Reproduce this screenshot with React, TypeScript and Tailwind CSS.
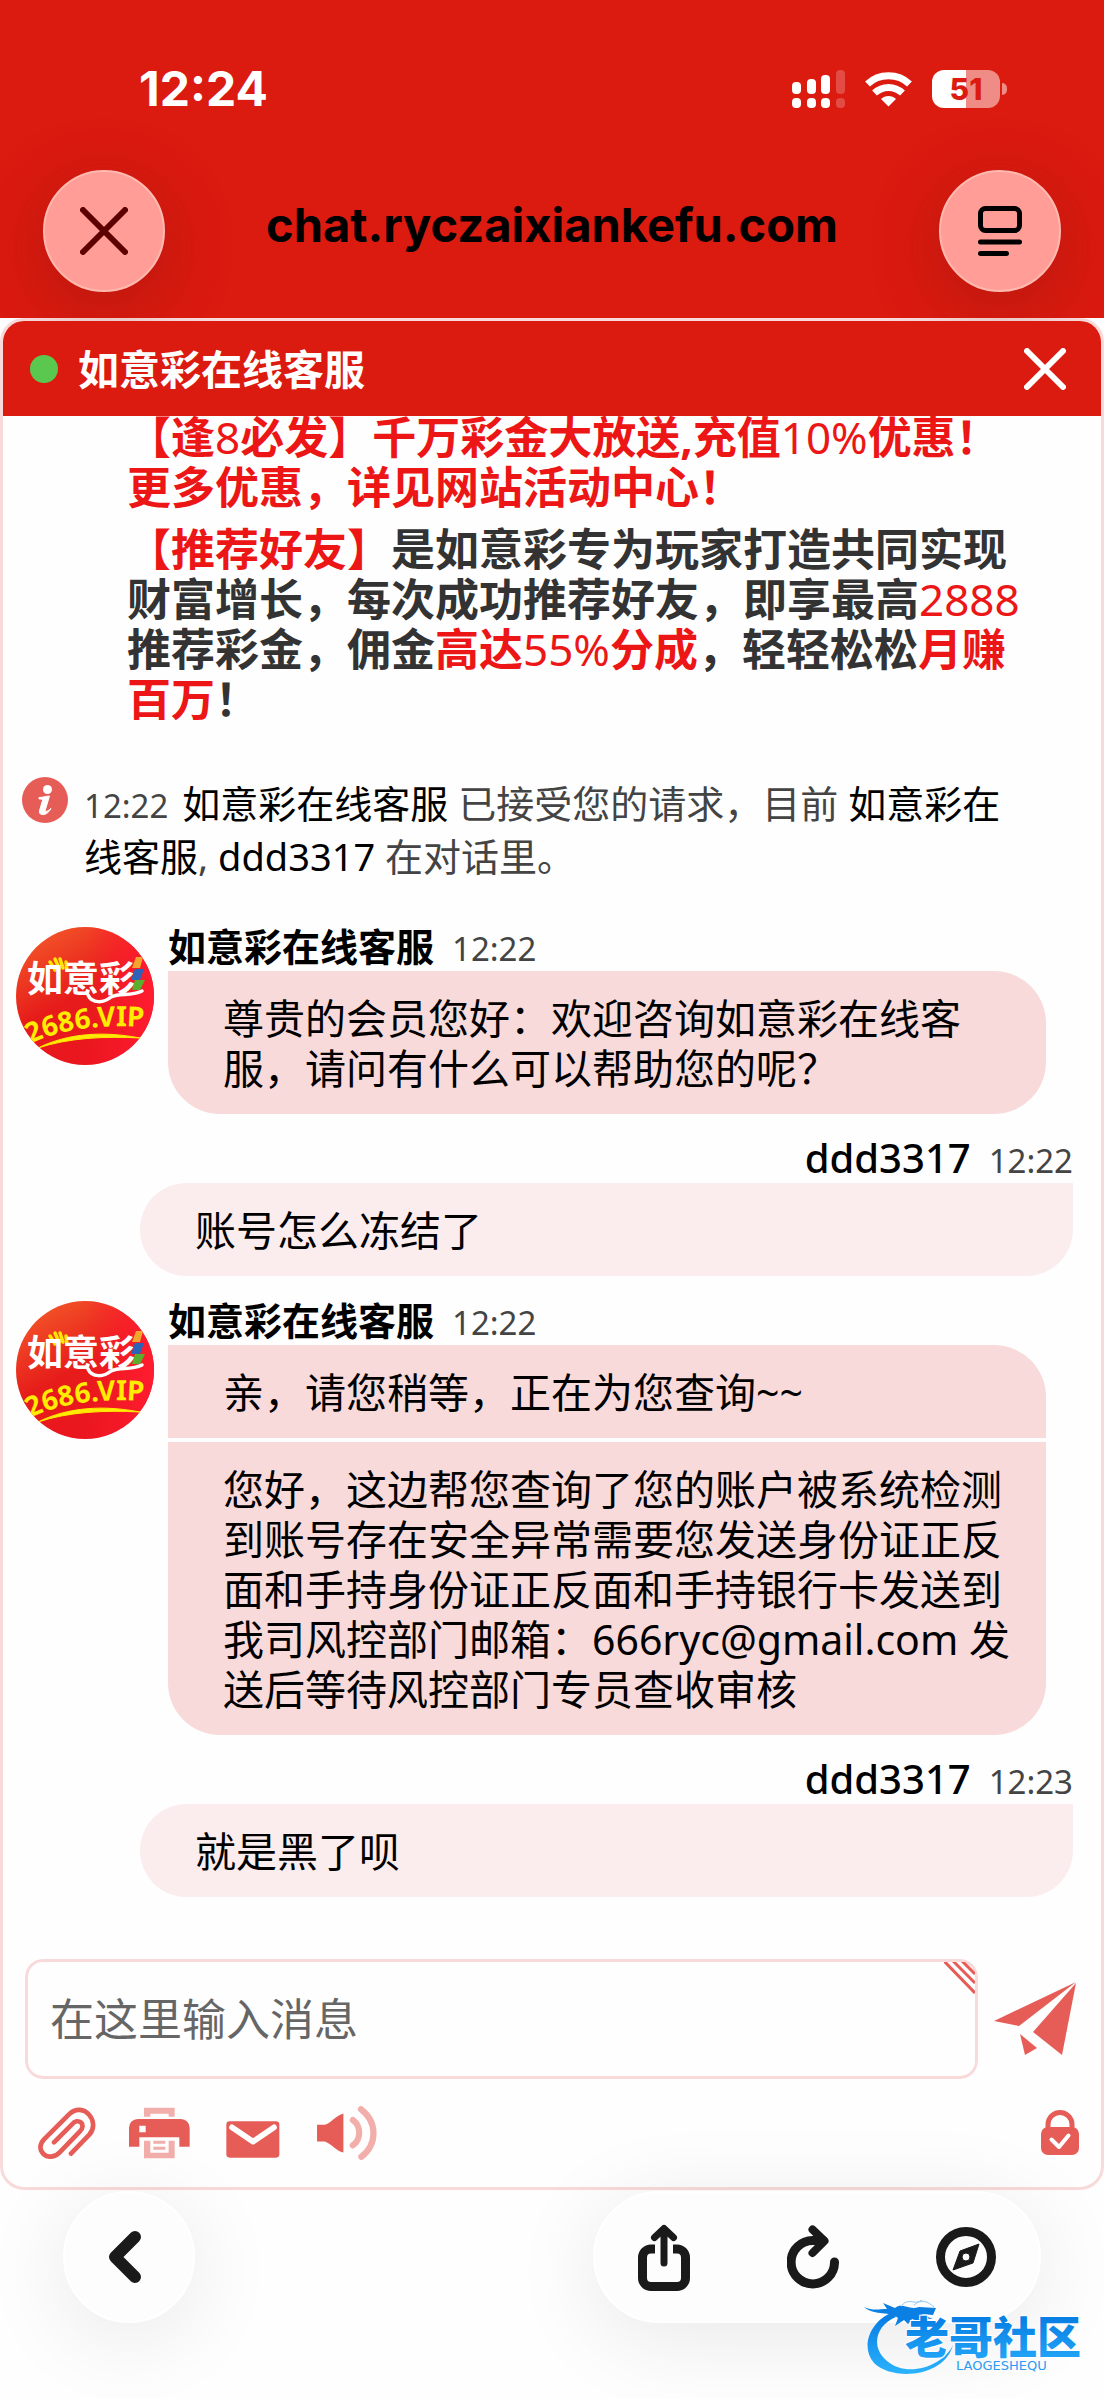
import type { ReactNode } from "react";

type Message = { text: string };
type MessageGroup = { from: "agent" | "visitor"; name: string; time: string; messages: Message[] };

const AGENT_NAME = "如意彩在线客服";
const VISITOR_NAME = "ddd3317";

const GROUPS: MessageGroup[] = [
  {
    from: "agent",
    name: AGENT_NAME,
    time: "12:22",
    messages: [{ text: "尊贵的会员您好：欢迎咨询如意彩在线客服，请问有什么可以帮助您的呢？" }],
  },
  {
    from: "visitor",
    name: VISITOR_NAME,
    time: "12:22",
    messages: [{ text: "账号怎么冻结了" }],
  },
  {
    from: "agent",
    name: AGENT_NAME,
    time: "12:22",
    messages: [
      { text: "亲，请您稍等，正在为您查询~~" },
      {
        text: "您好，这边帮您查询了您的账户被系统检测到账号存在安全异常需要您发送身份证正反面和手持身份证正反面和手持银行卡发送到我司风控部门邮箱：666ryc@gmail.com 发送后等待风控部门专员查收审核",
      },
    ],
  },
  {
    from: "visitor",
    name: VISITOR_NAME,
    time: "12:23",
    messages: [{ text: "就是黑了呗" }],
  },
];

function StatusBar() {
  return (
    <div className="flex h-[58px] items-center justify-between pr-[97px] pl-[139px]">
      <span className="font-['Inter'] text-[48px] leading-[58px] font-bold">12:24</span>
      <div className="flex items-center gap-5">
        <svg width="53" height="38" viewBox="0 0 53 38" fill="currentColor" aria-hidden="true">
          <rect x="0" y="12" width="9" height="12" rx="4" />
          <rect x="15" y="9" width="9" height="15" rx="4" />
          <rect x="29" y="5" width="9" height="19" rx="4" />
          <rect x="44" y="0" width="9" height="24" rx="4" opacity="0.22" />
          <rect x="0" y="28" width="9" height="10" rx="4" />
          <rect x="15" y="28" width="9" height="10" rx="4" />
          <rect x="29" y="28" width="9" height="10" rx="4" />
          <rect x="44" y="28" width="9" height="10" rx="4" opacity="0.22" />
        </svg>
        <svg width="47" height="35" viewBox="0 0 47 35" aria-hidden="true">
          <g fill="none" stroke="currentColor" strokeWidth="7">
            <path d="M2.500 12C14 1 33 1 44.500 12" />
            <path d="M9.500 21C17.500 13.500 29.500 13.500 37.500 21" />
          </g>
          <path d="M23.500 34.500L16 27C20 23 27 23 31 27Z" fill="currentColor" />
        </svg>
        <div className="flex items-center gap-[2px]">
          <span className="flex h-[38px] w-[68px] items-center justify-center rounded-xl bg-linear-to-r from-white from-50% to-[#ee8c85] to-50% font-['Inter'] text-[30px] leading-[38px] font-extrabold text-[#db1a10]">
            51
          </span>
          <span className="h-3 w-[5px] rounded-r-full bg-[#ee8c85]" />
        </div>
      </div>
    </div>
  );
}

function RoundButton({ label, children }: { label: string; children: ReactNode }) {
  return (
    <button
      type="button"
      aria-label={label}
      className="flex size-[122px] items-center justify-center rounded-full border-2 border-[#ffb9b1] bg-[#ff9d96] shadow-[0_16px_70px_rgba(90,20,10,0.28)]"
    >
      {children}
    </button>
  );
}

function BrowserHeader() {
  return (
    <header className="bg-[#db1a10] pt-[60px] pb-[26px] text-white">
      <StatusBar />
      <div className="mt-[52px] flex items-center justify-between px-[43px]">
        <RoundButton label="关闭">
          <svg width="48" height="48" viewBox="0 0 48 48" aria-hidden="true">
            <path d="M3 3L45 45M45 3L3 45" stroke="#5c0000" strokeWidth="6" strokeLinecap="round" />
          </svg>
        </RoundButton>
        <h1 className="pb-3 font-['Inter'] text-[47px] leading-[58px] font-bold text-black">
          chat.ryczaixiankefu.com
        </h1>
        <RoundButton label="阅读模式">
          <svg width="44" height="50" viewBox="0 0 44 50" fill="none" stroke="#000" strokeWidth="5" strokeLinecap="round" aria-hidden="true">
            <rect x="2.5" y="2.5" width="39" height="22" rx="5" />
            <path d="M2.500 36H41.500M2.500 47.500H28.500" />
          </svg>
        </RoundButton>
      </div>
    </header>
  );
}

function ChatHeader() {
  return (
    <div className="relative z-10 flex h-[95px] items-center justify-between bg-[#db1a10] pr-[35px] pl-[27px] text-white">
      <div className="flex items-center gap-5">
        <span className="size-7 rounded-full bg-[#5ac84f]" />
        <h2 className="text-[41px] leading-[50px] font-bold">{AGENT_NAME}</h2>
      </div>
      <button type="button" aria-label="关闭对话">
        <svg width="42" height="42" viewBox="0 0 42 42" aria-hidden="true">
          <path d="M3 3L39 39M39 3L3 39" stroke="currentColor" strokeWidth="6" strokeLinecap="round" />
        </svg>
      </button>
    </div>
  );
}

function Red({ children }: { children: ReactNode }) {
  return <span className="text-[#ec1616]">{children}</span>;
}

function Num({ children }: { children: ReactNode }) {
  return <span className="font-normal">{children}</span>;
}

function Promo() {
  return (
    <div className="-mt-1 flex flex-col gap-3 pr-[71px] pl-[124px] text-[44px] leading-[50px] font-bold text-[#333333]">
      <p>
        <Red>
          【逢<Num>8</Num>必发】千万彩金大放送,充值<Num>10%</Num>优惠！更多优惠，详见网站活动中心！
        </Red>
      </p>
      <p>
        <Red>【推荐好友】</Red>是如意彩专为玩家打造共同实现财富增长，每次成功推荐好友，即享最高
        <Red>
          <Num>2888</Num>
        </Red>
        推荐彩金，佣金
        <Red>
          高达<Num>55%</Num>分成
        </Red>
        ，轻轻松松<Red>月赚百万</Red>！
      </p>
    </div>
  );
}

function SystemNotice() {
  return (
    <div className="mt-[53px] flex items-start gap-4 pr-[71px] pl-[19px]">
      <svg width="46" height="46" viewBox="0 0 46 46" className="shrink-0" aria-hidden="true">
        <circle cx="23" cy="23" r="23" fill="#e65d58" />
        <circle cx="25.500" cy="12.500" r="4.500" fill="#fff" />
        <path d="M17 20.500C20 20.500 22 19.500 27.500 19L23 34C24.500 35 26 34 29 31.500C26 36.500 23 38 20 37.500C17 37 17 35 18 32L20.500 23.500C20.500 22 19 22 17 22Z" fill="#fff" stroke="#fff" strokeWidth="1" />
      </svg>
      <p className="text-[38px] leading-[53px] text-[#444444]">
        <time className="mr-[14px] text-[33px] leading-none">12:22</time>
        <span className="text-black">{AGENT_NAME}</span> 已接受您的请求，目前{" "}
        <span className="text-black">{AGENT_NAME}</span>, <span className="text-black">{VISITOR_NAME}</span> 在对话里。
      </p>
    </div>
  );
}

function Avatar({ id }: { id: string }) {
  return (
    <svg width="138" height="138" viewBox="0 0 138 138" className="mt-[6px] shrink-0" role="img" aria-label="如意彩 2686.VIP">
      <defs>
        <linearGradient id={`${id}-bg`} x1="0.15" y1="0" x2="0.7" y2="1">
          <stop offset="0" stopColor="#f4592a" />
          <stop offset="0.5" stopColor="#e61c1a" />
          <stop offset="1" stopColor="#ec1420" />
        </linearGradient>
        <linearGradient id={`${id}-glow`} x1="0" y1="0.5" x2="1" y2="0.5">
          <stop offset="0.5" stopColor="#ff1c30" stopOpacity="0" />
          <stop offset="1" stopColor="#ff1c30" />
        </linearGradient>
        <clipPath id={`${id}-clip`}>
          <circle cx="69" cy="69" r="69" />
        </clipPath>
        <path id={`${id}-arc`} d="M14 117Q62 94 136 101" />
      </defs>
      <g clipPath={`url(#${id}-clip)`}>
        <rect width="138" height="138" fill={`url(#${id}-bg)`} />
        <rect width="138" height="138" fill={`url(#${id}-glow)`} />
        <g fill="none" stroke="#ffe600" strokeWidth="3.500" strokeLinecap="round">
          <path d="M39 43L34 35M43 41L39 32M47 41L44 32M51 43L50 35" />
        </g>
        <text x="11" y="65" fontSize="36" fontWeight="700" fill="#fff" fontFamily="'Noto Sans CJK SC', sans-serif">
          如意彩
        </text>
        <path d="M72 68C76 77 88 76 95 70C104 65 114 70 126 64" fill="none" stroke="#fff" strokeWidth="3.500" strokeLinecap="round" />
        <path d="M120 30H127L124 41H116Z" fill="#f6a52c" />
        <path d="M119 42H128L124 53H115Z" fill="#2c62b8" />
        <path d="M119 53H129L124 63H116Z" fill="#5aaf2e" />
        <text fontSize="28" fontWeight="700" fill="#ffec00" fontFamily="'Noto Sans', sans-serif">
          <textPath href={`#${id}-arc`}>2686.VIP</textPath>
        </text>
        <path d="M22 121C52 106 88 104 124 111C88 109 52 111 22 121Z" fill="#ffec00" stroke="#ffec00" />
      </g>
    </svg>
  );
}

function AgentGroup({ group, id }: { group: MessageGroup; id: string }) {
  return (
    <li className="flex items-start gap-[14px] pr-[55px] pl-[13px]">
      <Avatar id={id} />
      <div className="min-w-0 flex-1">
        <div className="flex h-[50px] items-baseline gap-[18px] leading-[50px]">
          <span className="text-[38px] font-bold">{group.name}</span>
          <time className="text-[33px] text-[#444444]">{group.time}</time>
        </div>
        <div className="flex flex-col gap-1 overflow-hidden rounded-tr-[52px] rounded-b-[52px]">
          {group.messages.map((m) => (
            <p key={m.text} className="bg-[#f8dada] pt-[22px] pr-8 pb-[21px] pl-[55px] text-[41px] leading-[50px]">
              {m.text}
            </p>
          ))}
        </div>
      </div>
    </li>
  );
}

function VisitorGroup({ group }: { group: MessageGroup }) {
  return (
    <li className="pr-7 pl-[137px]">
      <div className="flex h-[50px] items-baseline justify-end gap-[18px] leading-[50px]">
        <span className="text-[40px] font-medium">{group.name}</span>
        <time className="text-[33px] text-[#444444]">{group.time}</time>
      </div>
      {group.messages.map((m) => (
        <p
          key={m.text}
          className="rounded-l-[47px] rounded-br-[47px] bg-[#fbeded] px-[55px] pt-[22px] pb-[21px] text-[41px] leading-[50px]"
        >
          {m.text}
        </p>
      ))}
    </li>
  );
}

function Composer() {
  return (
    <form className="mt-[62px] flex items-center gap-4 pr-6 pl-[22px]" onSubmit={(e) => e.preventDefault()}>
      <div className="relative flex-1 overflow-hidden rounded-[18px]">
        <input
          type="text"
          aria-label="消息"
          placeholder="在这里输入消息"
          className="block h-[120px] w-full rounded-[18px] border-[3px] border-[#f8dada] bg-transparent px-[22px] text-[44px] outline-none placeholder:text-[#666666]"
        />
        <svg width="31" height="32" viewBox="0 0 31 32" className="absolute top-[3px] right-[3px]" stroke="#e65d58" strokeWidth="3" aria-hidden="true">
          <path d="M0 -1L31 31M9 -1L31 21M18 -1L31 12" />
        </svg>
      </div>
      <button type="submit" aria-label="发送">
        <svg width="83" height="74" viewBox="0 0 83 74" fill="#e65d58" aria-hidden="true">
          <path d="M0 39L82 0L25 44Z" />
          <path d="M82 1L39 50L68 73Z" />
          <path d="M26 52L43 66L31 73Z" />
        </svg>
      </button>
    </form>
  );
}

function Toolbar() {
  return (
    <div className="mt-[26px] flex h-[58px] items-center pr-[22px] pb-[3px] pl-[35px]">
      <div className="flex items-center gap-8">
        <button type="button" aria-label="附件">
          <svg width="59" height="52" viewBox="24 40 177 156" fill="none" stroke="#e65d58" strokeWidth="14" strokeLinecap="round" strokeLinejoin="round" aria-hidden="true">
            <path d="M123 180L178 123C213 84 160 21 117 62L42 137C10 171 57 210 89 176L149 114C172 91 143 70 126 92L72 146" />
          </svg>
        </button>
        <button type="button" aria-label="打印">
          <svg width="61" height="52" viewBox="297 40 183 156" fill="#e65d58" aria-hidden="true">
            <path fill="#f2aeab" d="M342 69V42H434V69H416V60H361V69Z" />
            <path fillRule="evenodd" d="M297 159V102A26 26 0 0 1 323 76H453A26 26 0 0 1 479 102V159H448V131H328V159ZM328 96V116H347V96Z" />
            <path fill="#f2aeab" d="M342 141H361V177H416V141H434V194H342ZM370 141H406V150H370ZM370 159H406V168H370Z" />
          </svg>
        </button>
        <button type="button" aria-label="邮件" className="pl-1">
          <svg width="54" height="52" viewBox="587 40 162 156" aria-hidden="true">
            <rect x="588" y="83" width="159" height="109" rx="10" fill="#e65d58" />
            <path d="M605 101L668 144L731 101" fill="none" stroke="#fff" strokeWidth="17" strokeLinecap="round" strokeLinejoin="round" />
          </svg>
        </button>
        <button type="button" aria-label="声音" className="pl-1">
          <svg width="61" height="56" viewBox="857 38 183 172" aria-hidden="true">
            <path d="M858 99H882C905 90 916 70 939 64V184C916 178 905 159 882 150H858Z" fill="#e65d58" />
            <path d="M968 84C994 103 994 143 968 162M993 51C1044 90 1044 158 994 197" fill="none" stroke="#f2aeab" strokeWidth="19" strokeLinecap="round" />
          </svg>
        </button>
      </div>
      <button type="button" aria-label="安全" className="ml-auto">
        <svg width="38" height="45" viewBox="0 0 38 45" fill="none" strokeLinecap="round" strokeLinejoin="round" aria-hidden="true">
          <path d="M7 20V14.500A12 12 0 0 1 31 14.500V20" stroke="#e65d58" strokeWidth="5" />
          <rect y="17" width="38" height="28" rx="7" fill="#e65d58" />
          <path d="M10.500 29.500L18 37L27.500 25.500" stroke="#fff" strokeWidth="4" />
        </svg>
      </button>
    </div>
  );
}

function Watermark() {
  return (
    <svg width="224" height="78" viewBox="0 0 224 78" className="absolute right-4 bottom-6" role="img" aria-label="老哥社区 LAOGESHEQU">
      <defs>
        <linearGradient id="wm" x1="0" y1="0" x2="0" y2="78" gradientUnits="userSpaceOnUse">
          <stop offset="0.300" stopColor="#0a80e4" />
          <stop offset="1" stopColor="#2bb4ff" />
        </linearGradient>
      </defs>
      <g fill="url(#wm)">
        <path d="M29 15C6 24 -4 50 10 66C28 84 80 81 89 48C80 68 44 82 23 64C6 50 12 28 32 20Z" />
        <path d="M0 10C9 14 14 12 23 12L19 6L31 11C38 5 45 14 55 10L72 11L69 18L57 17L69 22L55 21L59 26L48 22L44 27L40 23L31 29L34 21C26 13 12 20 0 10Z" />
      </g>
      <path d="M38 8C46 0 50 9 58 3M50 8C58 1 64 5 70 10" fill="none" stroke="#8fcaf8" strokeWidth="1" />
      <text x="41" y="57" fontSize="44" fontWeight="900" fill="url(#wm)" stroke="#fff" strokeWidth="2" paintOrder="stroke" fontFamily="'Noto Sans CJK SC', sans-serif">
        老哥社区
      </text>
      <text x="92" y="73" fontSize="13" fill="#2a9cf4" fontFamily="'DejaVu Sans', sans-serif">
        LAOGESHEQU
      </text>
    </svg>
  );
}

function BottomBar() {
  return (
    <nav className="relative flex items-center justify-between px-[63px] pt-px pb-[76px] text-[#1a1a1a]" aria-label="浏览器工具栏">
      <button
        type="button"
        aria-label="返回"
        className="flex size-[132px] items-center justify-center rounded-full border-2 border-white bg-[#fdfdfd] pr-2 shadow-[0_14px_90px_rgba(0,0,0,0.09)]"
      >
        <svg width="34" height="54" viewBox="0 0 34 54" aria-hidden="true">
          <path d="M27 7L7 27L27 47" fill="none" stroke="currentColor" strokeWidth="12" strokeLinecap="round" strokeLinejoin="round" />
        </svg>
      </button>
      <div className="flex h-[132px] items-center gap-[97px] rounded-full border-2 border-white bg-[#fdfdfd] px-[43px] shadow-[0_14px_90px_rgba(0,0,0,0.09)]">
        <button type="button" aria-label="分享">
          <svg width="52" height="67" viewBox="0 0 52 67" fill="none" stroke="currentColor" strokeWidth="9" aria-hidden="true">
            <path d="M17 25H13A8.500 8.500 0 0 0 4.500 33.500V54A8.500 8.500 0 0 0 13 62.500H39A8.500 8.500 0 0 0 47.500 54V33.500A8.500 8.500 0 0 0 39 25H35" />
            <path d="M26 39V6M16.500 13.500L26 4.500L35.500 13.500" strokeWidth="7" strokeLinecap="round" strokeLinejoin="round" />
          </svg>
        </button>
        <button type="button" aria-label="刷新">
          <svg width="52" height="64" viewBox="0 0 52 64" fill="none" stroke="currentColor" strokeLinecap="round" strokeLinejoin="round" aria-hidden="true">
            <path d="M47.500 37A21.700 21.700 0 1 1 26 15.500H36" strokeWidth="9" />
            <path d="M25.500 4.500L37.500 16L25.500 28" strokeWidth="8" />
          </svg>
        </button>
        <button type="button" aria-label="在浏览器中打开">
          <svg width="60" height="60" viewBox="0 0 60 60" aria-hidden="true">
            <circle cx="30" cy="30" r="25.500" fill="none" stroke="currentColor" strokeWidth="9" />
            <path fillRule="evenodd" d="M43 17L37 36L17 43L24 24ZM30 26A4 4 0 1 0 30 34A4 4 0 1 0 30 26Z" fill="currentColor" stroke="currentColor" strokeWidth="1" strokeLinejoin="round" />
          </svg>
        </button>
      </div>
      <Watermark />
    </nav>
  );
}

export default function App() {
  return (
    <div lang="zh-CN" className="bg-[#fefefe] font-['Noto_Sans','Noto_Sans_CJK_SC',sans-serif] text-black">
      <BrowserHeader />
      <main className="overflow-hidden rounded-3xl border-[3px] border-[#f8dada]">
        <ChatHeader />
        <Promo />
        <SystemNotice />
        <ul className="mt-[38px] flex flex-col gap-[19px]">
          {GROUPS.map((group, i) =>
            group.from === "agent" ? (
              <AgentGroup key={i} group={group} id={`avatar-${i}`} />
            ) : (
              <VisitorGroup key={i} group={group} />
            ),
          )}
        </ul>
        <Composer />
        <Toolbar />
        <div className="h-6" />
      </main>
      <BottomBar />
    </div>
  );
}
